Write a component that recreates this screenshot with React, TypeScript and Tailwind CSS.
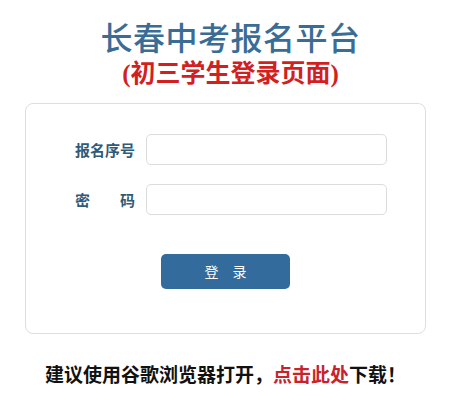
import React from "react";

const cjk = '"Noto Sans CJK SC", "Liberation Sans", sans-serif';
const serifCjk = '"Liberation Serif", "Noto Sans CJK SC", serif';

export default function App() {
    return (
        <div className="w-[461px] h-[406px] bg-white overflow-hidden" style={{ fontFamily: cjk }}>
            {/* Header */}
            <div className="pt-[18px] flex flex-col items-center">
                <h1 className="text-[32px] leading-[36px] font-medium text-[#3a6d96] tracking-[0.5px]">长春中考报名平台</h1>
                <h2
                    className="mt-[6px] text-[25px] leading-[28px] font-bold text-[#d21f1f]"
                    style={{ fontFamily: serifCjk }}
                >
                    (初三学生登录页面)
                </h2>
            </div>

            {/* Login card */}
            <div className="ml-[25px] mt-[15px] w-[401px] h-[231px] rounded-[8px] border border-[#dedede] pt-[30px]">
                <div className="flex items-center pl-[49px]">
                    <label className="w-[60px] text-[15px] font-bold text-[#2f5a78] leading-none">报名序号</label>
                    <input className="ml-[11px] w-[241px] h-[31px] rounded-[5px] border border-[#dcdcdc] bg-white outline-none px-2 text-sm" />
                </div>
                <div className="flex items-center pl-[49px] mt-[19px]">
                    <label className="w-[60px] flex justify-between text-[15px] font-bold text-[#2f5a78] leading-none">
                        <span>密</span>
                        <span>码</span>
                    </label>
                    <input
                        type="password"
                        className="ml-[11px] w-[241px] h-[31px] rounded-[5px] border border-[#dcdcdc] bg-white outline-none px-2 text-sm"
                    />
                </div>
                <div className="flex justify-center mt-[39px]">
                    <button className="w-[129px] h-[35px] rounded-[5px] bg-[#336b9c] text-white text-[14px] tracking-[14px] pl-[14px]">
                        登录
                    </button>
                </div>
            </div>

            {/* Footer notice */}
            <p className="mt-[29px] pl-[45px] text-[19px] leading-[22px] font-bold text-[#111]">
                建议使用谷歌浏览器打开，<span className="text-[#c8232c]">点击此处</span>下载！
            </p>
        </div>
    );
}
